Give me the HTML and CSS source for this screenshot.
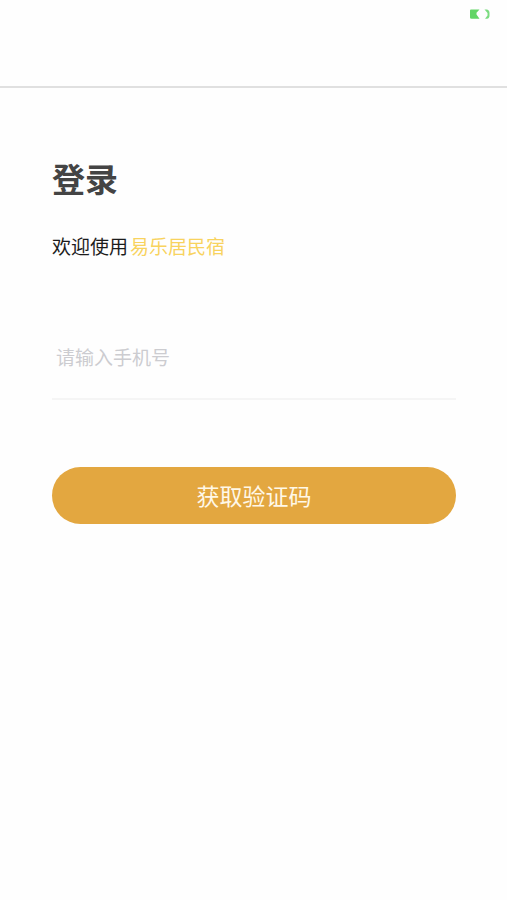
FILE: index.html
```html
<!DOCTYPE html>
<html lang="zh-CN">
<head>
<meta charset="utf-8">
<meta name="viewport" content="width=device-width, initial-scale=1">
<title>登录</title>
<link rel="stylesheet" href="styles.css">
</head>
<body>
<header class="topbar">
  <svg class="battery" width="22" height="12" viewBox="0 0 22 12" aria-hidden="true">
    <path d="M2 1.500H10.500L7.500 4.800V6.500L10.500 10.800H2.500Q1 10.800 1 9.500V2.500Q1 1.500 2 1.500Z" fill="#62d566"/>
    <path d="M15.500 1.500H18Q20.500 2 20.500 5V7.500Q20.500 10.500 18 10.800H16L18.500 7.500V5Z" fill="#7bdc80"/>
  </svg>
</header>
<main class="login">
  <h1 class="title">登录</h1>
  <p class="welcome">欢迎使用<span class="brand">易乐居民宿</span></p>
  <form class="form">
    <input class="phone" type="tel" placeholder="请输入手机号" aria-label="请输入手机号">
    <button class="submit" type="button">获取验证码</button>
  </form>
</main>
</body>
</html>
```
FILE: styles.css
```css
* {
  box-sizing: border-box;
}

body {
  margin: 0;
  background: #fefefe;
  color: #1c1c1c;
  font-family: "Noto Sans CJK SC", sans-serif;
}

.topbar {
  display: flex;
  justify-content: flex-end;
  align-items: flex-start;
  height: 88px;
  padding: 8px 16px;
  border-bottom: 2px solid #e0e0e0;
}

.battery {
  display: block;
}

.login {
  padding: 64px 51px 64px 52px;
}

.title {
  margin: 0;
  color: #444;
  font-size: 33px;
  font-weight: 700;
  line-height: 52px;
}

.welcome {
  margin: 28px 0 0;
  font-size: 19px;
  line-height: 28px;
}

.brand {
  margin-left: 2px;
  color: #f8d35e;
}

.form {
  margin-top: 56px;
}

.phone {
  display: block;
  width: 100%;
  height: 84px;
  padding: 0 4px 2px;
  border: 0;
  border-bottom: 2px solid #f5f5f5;
  background: transparent;
  color: #444;
  font: inherit;
  font-size: 19px;
}

.phone::placeholder {
  color: #ccccd0;
  opacity: 1;
}

.submit {
  display: block;
  width: 100%;
  height: 57px;
  margin-top: 67px;
  padding: 0 0 2px;
  border: 0;
  border-radius: 29px;
  background: #e3a740;
  color: #fff8e8;
  font: inherit;
  font-size: 23px;
}
```
